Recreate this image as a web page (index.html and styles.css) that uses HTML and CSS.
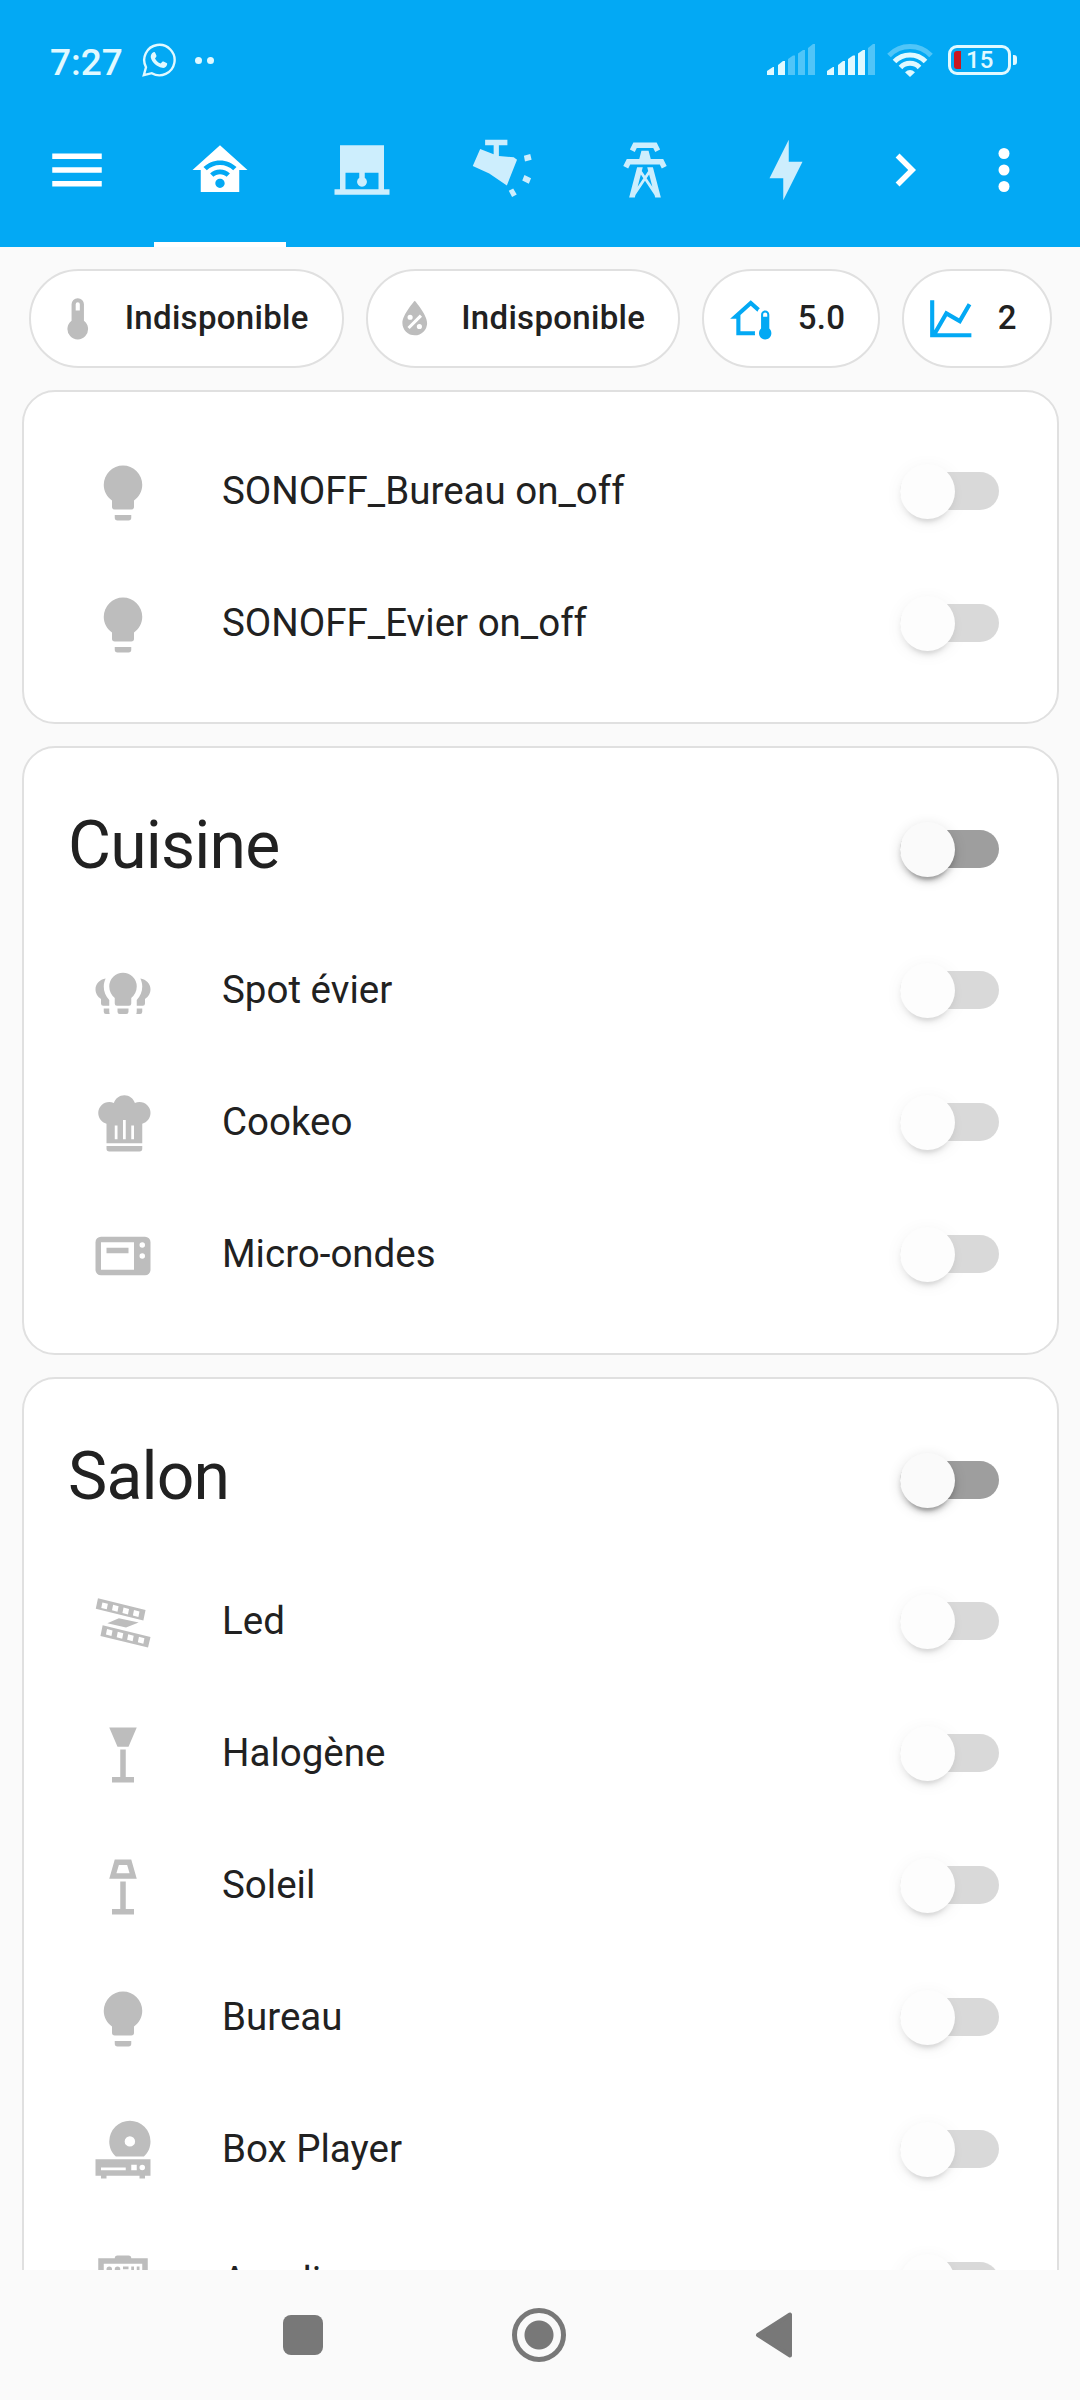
FILE: index.html
```html
<!DOCTYPE html>
<html lang="fr">
<head>
  <meta charset="UTF-8">
  <meta name="viewport" content="width=device-width, initial-scale=1.0">
  <title>Maison</title>
  <link rel="stylesheet" href="styles.css">
</head>
<body>
  <!-- Icon set -->
  <svg class="sprite" xmlns="http://www.w3.org/2000/svg">
    <symbol id="bulb" viewBox="0 0 24 24"><path d="M12,2A7,7 0 0,0 5,9C5,11.38 6.19,13.47 8,14.74V17A1,1 0 0,0 9,18H15A1,1 0 0,0 16,17V14.74C17.81,13.47 19,11.38 19,9A7,7 0 0,0 12,2M9,21A1,1 0 0,0 10,22H14A1,1 0 0,0 15,21V20H9V21Z"/></symbol>
    <symbol id="bulb-group" viewBox="0 0 24 24"><path d="M12,5A5,5 0 0,0 7,10C7,11.8 7.8,13.2 9,14.2V16.2A0.8,0.8 0 0,0 9.8,17H14.2A0.8,0.8 0 0,0 15,16.2V14.2C16.2,13.2 17,11.8 17,10A5,5 0 0,0 12,5M10,18V19.2A0.8,0.8 0 0,0 10.8,20H13.2A0.8,0.8 0 0,0 14,19.2V18H10M5.7,7.1C3.5,7.4 2,9.1 2,11C2,12.5 2.8,13.8 4,14.5V16.2A0.8,0.8 0 0,0 4.8,17H7V14.9C5.7,13.6 5,11.9 5,10C5,8.9 5.3,7.9 5.7,7.1M5,18V19.2A0.8,0.8 0 0,0 5.8,20H7.2C7,19.6 7,19.2 7,18H5M18.3,7.1C20.5,7.4 22,9.1 22,11C22,12.5 21.2,13.8 20,14.5V16.2A0.8,0.8 0 0,1 19.2,17H17V14.9C18.3,13.6 19,11.9 19,10C19,8.9 18.7,7.9 18.3,7.1M19,18V19.2A0.8,0.8 0 0,1 18.2,20H16.8C17,19.6 17,19.2 17,18H19Z"/></symbol>
    <symbol id="chef-hat" viewBox="0 0 24 24"><path d="M12.5,1.5C10.73,1.5 9.17,2.67 8.67,4.37C8.14,4.13 7.58,4 7,4A4,4 0 0,0 3,8C3,9.82 4.24,11.41 6,11.87V19H19V11.87C20.76,11.41 22,9.82 22,8A4,4 0 0,0 18,4C17.42,4 16.86,4.13 16.33,4.37C15.83,2.67 14.27,1.5 12.5,1.5M12,10.5H13V17.5H12V10.5M9,12.5H10V17.5H9V12.5M15,12.5H16V17.5H15V12.5M6,20V21A1,1 0 0,0 7,22H18A1,1 0 0,0 19,21V20H6Z"/></symbol>
    <symbol id="microwave" viewBox="0 0 24 24"><path fill-rule="evenodd" d="M4,5H20A2,2 0 0,1 22,7V17A2,2 0 0,1 20,19H4A2,2 0 0,1 2,17V7A2,2 0 0,1 4,5M4,7V17H16V7H4M19,7A1,1 0 0,0 18,8A1,1 0 0,0 19,9A1,1 0 0,0 20,8A1,1 0 0,0 19,7M19,11A1,1 0 0,0 18,12A1,1 0 0,0 19,13A1,1 0 0,0 20,12A1,1 0 0,0 19,11M6,9H14V11H6V9Z"/></symbol>
    <symbol id="led-strip" viewBox="0 0 24 24">
      <path d="M2.9,3L20.2,7.3L19.4,11.1L2.1,6.8ZM4.6,12.8L22,17.1L21.1,20.9L3.8,16.7ZM6.3,12.1L10.5,10.3L17.7,11.8L13.1,13.6Z"/>
      <path class="hole" d="M4.5,4.5L6.5,5L6.1,7L4.1,6.5ZM8.4,5.4L10.4,5.9L10,7.9L8,7.4ZM12.2,6.4L14.2,6.9L13.8,8.9L11.8,8.4ZM16,7.3L18,7.8L17.6,9.8L15.6,9.3ZM6.2,14.2L8.2,14.7L7.8,16.7L5.8,16.2ZM10.1,15.2L12.1,15.7L11.7,17.7L9.7,17.2ZM13.9,16.1L15.9,16.6L15.5,18.6L13.5,18.1ZM17.8,17L19.8,17.5L19.4,19.5L17.4,19Z"/>
    </symbol>
    <symbol id="torchiere" viewBox="0 0 24 24"><path d="M7,2H17L14,9H10L7,2M11,10H13V20H16V22H8V20H11V10Z"/></symbol>
    <symbol id="floor-lamp" viewBox="0 0 24 24"><path fill-rule="evenodd" d="M9,2H15L17,9H7L9,2M10.5,4L9.6,7H14.4L13.5,4H10.5M11,10H13V20H16V22H8V20H11V10Z"/></symbol>
    <symbol id="disc-player" viewBox="0 0 24 24"><path fill-rule="evenodd" d="M14.5,1A7.5,7.5 0 0,0 7,8.5C7,10.7 7.9,12.6 9.4,14H19.6C21.1,12.6 22,10.7 22,8.5A7.5,7.5 0 0,0 14.5,1M14.5,6.6A1.9,1.9 0 0,1 16.4,8.5A1.9,1.9 0 0,1 14.5,10.4A1.9,1.9 0 0,1 12.6,8.5A1.9,1.9 0 0,1 14.5,6.6M2,15H22V21H20V22H18V21H6V22H4V21H2V15M4,18V19H13V18H4M15,17V19H17V17H15M19,17A1,1 0 0,0 18,18A1,1 0 0,0 19,19A1,1 0 0,0 20,18A1,1 0 0,0 19,17Z"/></symbol>
    <symbol id="amplifier" viewBox="0 0 24 24"><path fill-rule="evenodd" d="M10,2H14A1,1 0 0,1 15,3H21V21H3V3H9A1,1 0 0,1 10,2M5,5V9H19V5H5M7,6A1,1 0 0,1 8,7A1,1 0 0,1 7,8A1,1 0 0,1 6,7A1,1 0 0,1 7,6M10,6A1,1 0 0,1 11,7A1,1 0 0,1 10,8A1,1 0 0,1 9,7A1,1 0 0,1 10,6M12,6H14V7H12V6M15,6H16V8H15V6M17,6H18V8H17V6Z"/></symbol>
    <symbol id="thermometer" viewBox="0 0 24 24"><path d="M15 13V5A3 3 0 0 0 9 5V13A5 5 0 1 0 15 13M12 4A1 1 0 0 1 13 5V8H11V5A1 1 0 0 1 12 4Z"/></symbol>
    <symbol id="water-percent" viewBox="0 0 24 24"><path fill-rule="evenodd" d="M12,3.25C12,3.25 6,10 6,14C6,17.32 8.69,20 12,20A6,6 0 0,0 18,14C18,10 12,3.25 12,3.25M14.47,9.97L15.53,11.03L9.53,17.03L8.47,15.97L14.47,9.97M9.75,10A1.25,1.25 0 0,1 11,11.25A1.25,1.25 0 0,1 9.75,12.5A1.25,1.25 0 0,1 8.5,11.25A1.25,1.25 0 0,1 9.75,10M14.25,14.5A1.25,1.25 0 0,1 15.5,15.75A1.25,1.25 0 0,1 14.25,17A1.25,1.25 0 0,1 13,15.75A1.25,1.25 0 0,1 14.25,14.5Z"/></symbol>
    <symbol id="home-thermometer" viewBox="0 0 24 24"><path fill-rule="evenodd" d="M19 8C20.11 8 21 8.9 21 10V16.76C21.61 17.31 22 18.11 22 19C22 20.66 20.66 22 19 22C17.34 22 16 20.66 16 19C16 18.11 16.39 17.31 17 16.76V10C17 8.9 17.9 8 19 8M19 9C18.45 9 18 9.45 18 10V11H20V10C20 9.45 19.55 9 19 9M12 5.69L7 10.19V18H14.1L14 19L14.1 20H5V12H2L12 3L16.4 6.96C15.89 7.4 15.5 7.97 15.25 8.61L12 5.69Z"/></symbol>
    <symbol id="chart-line" viewBox="0 0 24 24"><path d="M16,11.78L20.24,4.45L21.97,5.45L16.74,14.5L10.23,10.75L5.46,19H22V21H2V3H4V17.54L9.5,8L16,11.78Z"/></symbol>
    <symbol id="menu" viewBox="0 0 24 24"><path d="M3,6H21V8H3V6M3,11H21V13H3V11M3,16H21V18H3V16Z"/></symbol>
    <symbol id="home-wifi" viewBox="0 0 24 24"><path fill-rule="evenodd" d="M12,3L2,12H5V20H19V12H22L12,3M12,8.5C14.34,8.5 16.46,9.43 18,10.94L16.8,12.12C15.58,10.91 13.88,10.17 12,10.17C10.12,10.17 8.42,10.91 7.2,12.12L6,10.94C7.54,9.43 9.66,8.5 12,8.5M12,11.83C13.4,11.83 14.67,12.39 15.6,13.3L14.4,14.47C13.79,13.87 12.94,13.5 12,13.5C11.06,13.5 10.2,13.87 9.6,14.47L8.4,13.3C9.33,12.39 10.6,11.83 12,11.83M12,15.17C12.94,15.17 13.7,15.91 13.7,16.83C13.7,17.76 12.94,18.5 12,18.5C11.06,18.5 10.3,17.76 10.3,16.83C10.3,15.91 11.06,15.17 12,15.17Z"/></symbol>
    <symbol id="roller-shade" viewBox="0 0 24 24"><path d="M20,19V3H4V19H2V21H22V19H20M6,19V13H11V14.8A1.8,1.8 0 1,0 13,14.8V13H18V19H6Z"/></symbol>
    <symbol id="cctv" viewBox="0 0 24 24"><path d="M5.5,1H13.6V3H10.5V6.9L15.9,7.4L17.1,8.3L13.4,17.6L7,13.3L1,10.5L3.7,4.4L8.6,6.3V3H5.5ZM19.6,6.8L21.9,6.2L22.4,8.3L20,8.9ZM19.8,13.8L22.2,15L21.4,17L19,15.8ZM14.1,19.5L15.7,18.7L17,20.9L15.3,21.8Z"/></symbol>
    <symbol id="pylon" viewBox="0 0 24 24"><path fill-rule="evenodd" d="M8.28,5.45L6.5,4.55L7.76,2H16.23L17.5,4.55L15.72,5.44L15,4H9L8.28,5.45M18.62,8H14.09L13.3,5H10.7L9.91,8H5.38L4.1,10.55L5.89,11.44L6.62,10H17.38L18.1,11.45L19.89,10.56L18.62,8M17.77,22H15.7L15.46,21.1L12,15.9L8.53,21.1L8.3,22H6.23L9.12,11H11.19L10.83,12.35L12,14.1L13.16,12.35L12.81,11H14.88L17.77,22M11.4,15L10.5,13.65L9.32,18.13L11.4,15M14.68,18.12L13.5,13.64L12.6,15L14.68,18.12Z"/></symbol>
    <symbol id="flash" viewBox="0 0 24 24"><path d="M11 15H6L13 1V9H18L11 23V15Z"/></symbol>
    <symbol id="chevron" viewBox="0 0 24 24"><path d="M8.59,16.58L13.17,12L8.59,7.41L10,6L16,12L10,18L8.59,16.58Z"/></symbol>
    <symbol id="dots" viewBox="0 0 24 24"><circle cx="12" cy="6" r="2"/><circle cx="12" cy="12" r="2"/><circle cx="12" cy="18" r="2"/></symbol>
  </svg>

  <header>
    <div class="status-bar">
      <span class="time">7:27</span>
      <svg class="whatsapp" viewBox="0 0 34 34">
        <path class="outline" d="M1.8,32.2L4,24.2A15.2,15.2 0 1,1 9.8,30.2Z"/>
        <path d="M11.5,9.2C12.4,8.8 13,9.2 13.3,9.9L14.4,12.6C14.6,13.1 14.5,13.5 14.1,14L13,15.4C14.1,17.6 16,19.4 18.7,20.6L20.3,18.8C20.7,18.3 21,18.3 21.5,18.5L24.6,20C25.2,20.3 25.3,20.7 25.1,21.5C24.5,24 22.5,25.2 20.1,24.8C14.5,23.8 9.9,19.2 8.8,14.6C8.4,12.3 9.5,10 11.5,9.2Z"/>
      </svg>
      <span class="dot"></span>
      <span class="dot"></span>
      <span class="spacer"></span>
      <svg class="signal" viewBox="0 0 48 32">
        <path d="M0,31V27L6,23H7V31ZM11,31V21L16,17H18V31Z"/>
        <path class="dim" d="M21,31V15L26,11.5H28V31ZM31,31V9.500L36,6H38V31ZM41,31V4L46,0H48V31Z"/>
      </svg>
      <svg class="signal" viewBox="0 0 48 32">
        <path d="M0,31V27L6,23H7V31ZM11,31V21L16,17H18V31ZM21,31V15L26,11.5H28V31ZM31,31V9.500L36,6H38V31Z"/>
        <path class="dim" d="M41,31V4L46,0H48V31Z"/>
      </svg>
      <svg class="wifi" viewBox="0 0 46 34">
        <path class="arc dim" d="M2,12.500A29,29 0 0,1 44,12.500"/>
        <path class="arc" d="M7.500,18.500A21.500,21.500 0 0,1 38.500,18.500"/>
        <path class="arc" d="M13.500,24.500A13,13 0 0,1 32.500,24.500"/>
        <path d="M18,29.200Q23,24.600 28,29.200L23,34Z"/>
      </svg>
      <div class="battery"><span class="level"></span><span>15</span></div>
      <span class="battery-tip"></span>
    </div>
    <nav class="toolbar">
      <svg class="icon menu"><use href="#menu"/></svg>
      <div class="tabs">
        <div class="tab active"><svg class="icon"><use href="#home-wifi"/></svg></div>
        <div class="tab"><svg class="icon"><use href="#roller-shade"/></svg></div>
        <div class="tab"><svg class="icon"><use href="#cctv"/></svg></div>
        <div class="tab"><svg class="icon"><use href="#pylon"/></svg></div>
        <div class="tab"><svg class="icon"><use href="#flash"/></svg></div>
      </div>
      <svg class="icon next"><use href="#chevron"/></svg>
      <svg class="icon more"><use href="#dots"/></svg>
    </nav>
  </header>

  <main>
    <div class="badges">
      <div class="badge"><svg><use href="#thermometer"/></svg><span>Indisponible</span></div>
      <div class="badge"><svg><use href="#water-percent"/></svg><span>Indisponible</span></div>
      <div class="badge on"><svg><use href="#home-thermometer"/></svg><span>5.0</span></div>
      <div class="badge on"><svg><use href="#chart-line"/></svg><span>2</span></div>
    </div>

    <section class="card">
      <div class="row"><svg class="icon"><use href="#bulb"/></svg><span class="name">SONOFF_Bureau on_off</span><div class="switch disabled"></div></div>
      <div class="row"><svg class="icon"><use href="#bulb"/></svg><span class="name">SONOFF_Evier on_off</span><div class="switch disabled"></div></div>
    </section>

    <section class="card">
      <div class="card-header"><h2>Cuisine</h2><div class="switch"></div></div>
      <div class="row"><svg class="icon"><use href="#bulb-group"/></svg><span class="name">Spot évier</span><div class="switch disabled"></div></div>
      <div class="row"><svg class="icon"><use href="#chef-hat"/></svg><span class="name">Cookeo</span><div class="switch disabled"></div></div>
      <div class="row"><svg class="icon"><use href="#microwave"/></svg><span class="name">Micro-ondes</span><div class="switch disabled"></div></div>
    </section>

    <section class="card">
      <div class="card-header"><h2>Salon</h2><div class="switch"></div></div>
      <div class="row"><svg class="icon"><use href="#led-strip"/></svg><span class="name">Led</span><div class="switch disabled"></div></div>
      <div class="row"><svg class="icon"><use href="#torchiere"/></svg><span class="name">Halogène</span><div class="switch disabled"></div></div>
      <div class="row"><svg class="icon"><use href="#floor-lamp"/></svg><span class="name">Soleil</span><div class="switch disabled"></div></div>
      <div class="row"><svg class="icon"><use href="#bulb"/></svg><span class="name">Bureau</span><div class="switch disabled"></div></div>
      <div class="row"><svg class="icon"><use href="#disc-player"/></svg><span class="name">Box Player</span><div class="switch disabled"></div></div>
      <div class="row"><svg class="icon"><use href="#amplifier"/></svg><span class="name">Ampli</span><div class="switch disabled"></div></div>
    </section>
  </main>

  <footer>
    <span class="nav-recent"></span>
    <span class="nav-home"></span>
    <svg class="nav-back" viewBox="0 0 38 46"><path d="M3,23L35,2.500V43.500Z"/></svg>
  </footer>
</body>
</html>
```
FILE: styles.css
```css
* {
  box-sizing: border-box;
}

body {
  font-family: Roboto, "Liberation Sans", sans-serif;
  margin: 0;
  height: 2400px;
  display: flex;
  flex-direction: column;
  overflow: hidden;
  background-color: #fafafa;
  color: #212121;
}

svg {
  display: block;
  fill: currentColor;
  flex: none;
}

.sprite {
  display: none;
}

.icon {
  width: 66px;
  height: 66px;
}

.hole {
  fill: #ffffff;
}

/* Header */
header {
  flex: none;
  height: 247px;
  background-color: #03a9f4;
  color: #ffffff;
}

.status-bar {
  height: 93px;
  padding: 27px 63px 0 50px;
  display: flex;
  align-items: center;
  color: #e1f9ff;
}

.time {
  width: 92px;
  font-size: 37px;
  font-weight: 500;
  line-height: 66px;
  padding-top: 5px;
}

.whatsapp {
  width: 34px;
  height: 34px;
  margin-right: 19px;
}

.whatsapp .outline {
  fill: none;
  stroke: currentColor;
  stroke-width: 2.4;
}

.dot {
  width: 7px;
  height: 7px;
  margin-right: 5px;
  border-radius: 50%;
  background-color: currentColor;
}

.spacer {
  flex: 1;
}

.signal {
  width: 48px;
  height: 32px;
  margin-right: 12px;
}

.dim {
  opacity: 0.35;
}

.wifi {
  width: 46px;
  height: 34px;
  margin-right: 15px;
}

.arc {
  fill: none;
  stroke: currentColor;
  stroke-width: 5;
}

.battery {
  width: 63px;
  height: 30px;
  padding-left: 3px;
  border: 3px solid currentColor;
  border-radius: 9px;
  display: flex;
  align-items: center;
  font-size: 24px;
  font-weight: 500;
  line-height: 24px;
}

.battery .level {
  width: 7px;
  height: 18px;
  margin-right: 5px;
  border-radius: 3px 0 0 3px;
  background-color: #c81720;
}

.battery-tip {
  width: 4px;
  height: 10px;
  margin-left: 2px;
  border-radius: 0 3px 3px 0;
  background-color: currentColor;
}

.toolbar {
  height: 154px;
  padding: 0 43px 0 44px;
  display: flex;
  align-items: center;
}

.tabs {
  flex: 1;
  height: 154px;
  margin-left: 44px;
  display: flex;
  gap: 9.5px;
}

.tab {
  width: 132px;
  display: flex;
  align-items: center;
  justify-content: center;
  border-bottom: 5px solid transparent;
  border-top: 5px solid transparent;
  color: #cdeefd;
}

.tab.active {
  color: #ffffff;
  border-bottom-color: #ffffff;
}

.next {
  margin-right: 33px;
}

/* Content */
main {
  flex: 1;
  min-height: 0;
  overflow: hidden;
  padding: 22px 21px 0 22px;
}

.badges {
  display: flex;
  justify-content: center;
  gap: 22px;
  margin-bottom: 22px;
}

.badge {
  height: 99px;
  padding: 0 33px 0 22px;
  display: flex;
  align-items: center;
  gap: 22px;
  background-color: #ffffff;
  border: 2px solid #e0e0e0;
  border-radius: 50px;
  font-size: 33px;
  font-weight: 500;
  letter-spacing: 0.3px;
}

.badge span {
  margin-top: -2px;
}

.badge svg {
  width: 49.5px;
  height: 49.5px;
  color: #bdbdbd;
}

.badge.on svg {
  color: #03a9f4;
}

.card {
  margin-bottom: 22px;
  padding: 44px;
  display: flex;
  flex-direction: column;
  gap: 22px;
  background-color: #ffffff;
  border: 2px solid #e0e0e0;
  border-radius: 33px;
}

.card-header {
  height: 132px;
  margin-top: -11px;
  display: flex;
  align-items: center;
  justify-content: space-between;
}

.card-header h2 {
  margin: -2px 0 0;
  font-size: 66px;
  font-weight: 400;
  line-height: 132px;
  letter-spacing: -0.012em;
}

.card-header .switch {
  margin-top: 4px;
}

.row {
  height: 110px;
  padding-left: 22px;
  display: flex;
  align-items: center;
}

.row .icon {
  margin-top: 3px;
  color: #bdbdbd;
}

.name {
  flex: 1;
  margin: -2px 0 0 66px;
  font-size: 38.5px;
  line-height: 55px;
}

/* Switches */
.switch {
  width: 99px;
  height: 38px;
  margin-right: 14px;
  display: flex;
  align-items: center;
  border-radius: 19px;
  background-color: #9e9e9e;
}

.switch::before {
  content: "";
  width: 55px;
  height: 55px;
  flex: none;
  border-radius: 50%;
  background-color: #fafafa;
  box-shadow: 0 8px 3px -5px rgba(0, 0, 0, 0.2), 0 5px 5px rgba(0, 0, 0, 0.14), 0 3px 14px rgba(0, 0, 0, 0.12);
}

.switch.disabled {
  opacity: 0.38;
}

/* System navigation */
footer {
  flex: none;
  height: 130px;
  padding: 0 287px 0 283px;
  display: flex;
  align-items: center;
  justify-content: space-between;
  background-color: #fafafa;
  color: #787878;
}

.nav-recent {
  width: 40px;
  height: 40px;
  border-radius: 8px;
  background-color: currentColor;
}

.nav-home {
  width: 54px;
  height: 54px;
  border: 5px solid currentColor;
  border-radius: 50%;
  background: radial-gradient(circle, currentColor 14px, transparent 15px);
}

.nav-back {
  width: 38px;
  height: 46px;
  stroke: currentColor;
  stroke-width: 4;
  stroke-linejoin: round;
}
```
